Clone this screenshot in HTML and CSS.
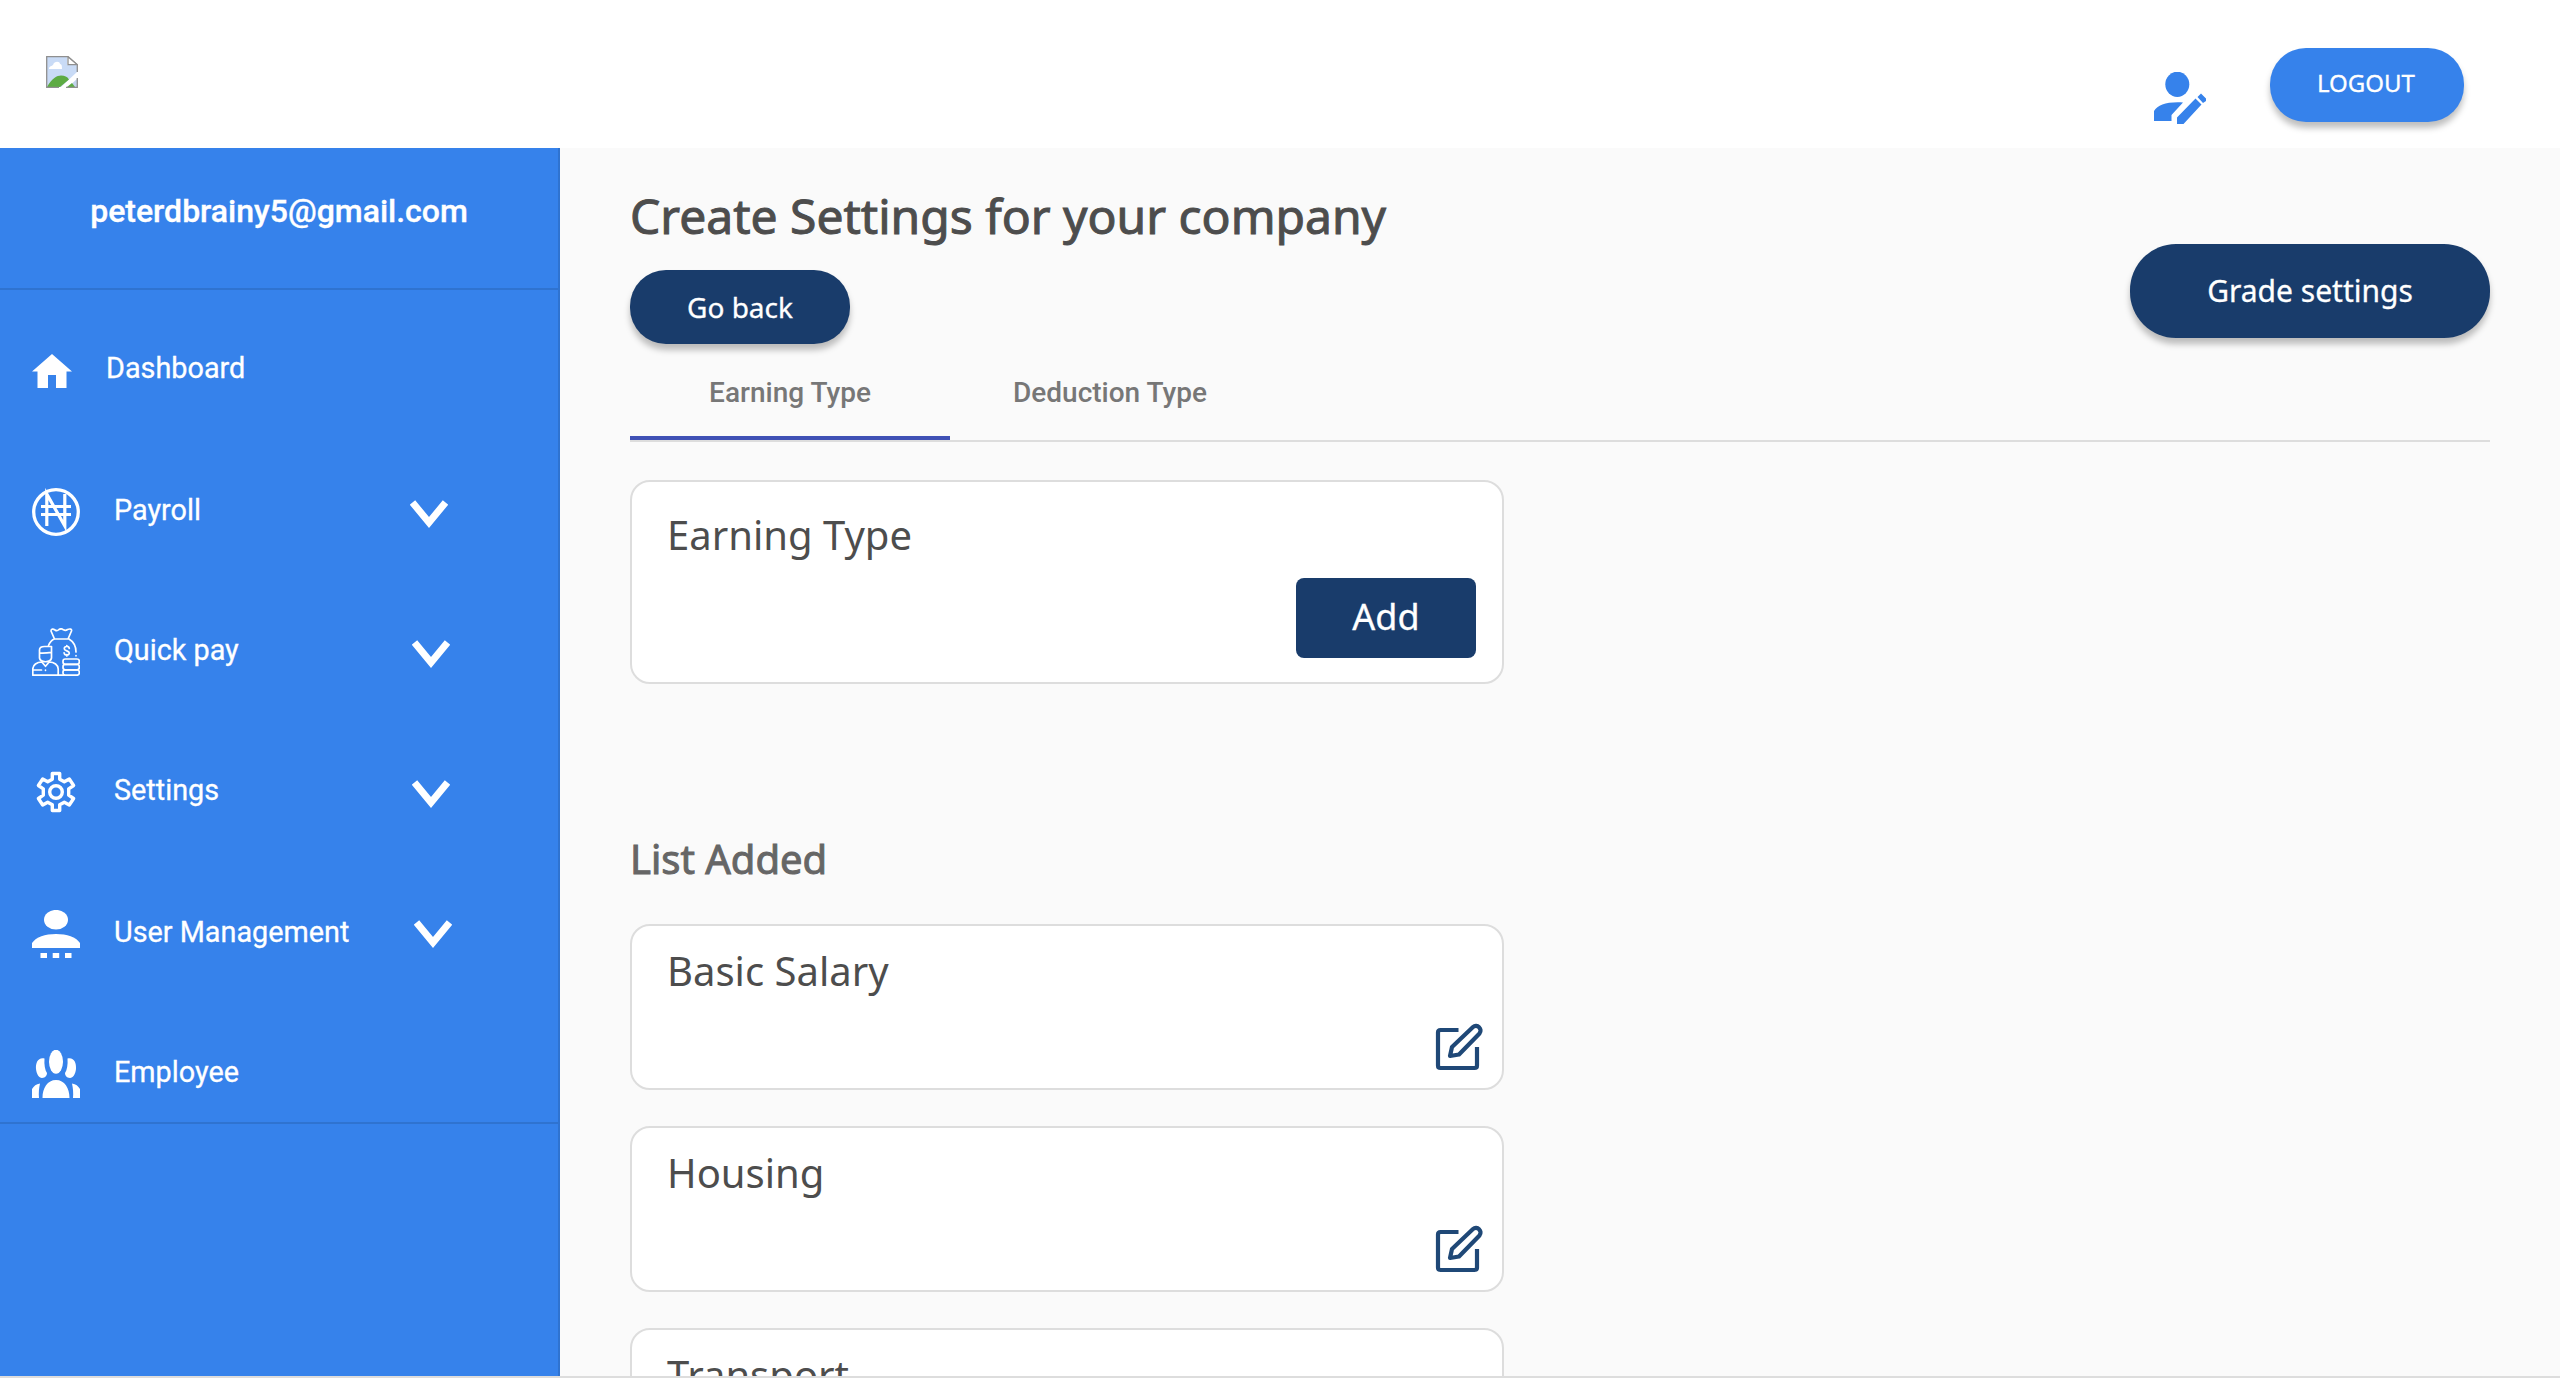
FILE: index.html
```html
<!DOCTYPE html>
<html lang="en">
<head>
<meta charset="utf-8">
<title>Create Settings</title>
<link rel="stylesheet" href="styles.css">
</head>
<body>
<div class="app">
  <header class="header">
    <svg class="logo" viewBox="0 0 32 32">
      <path d="M1 1h20v8h10v7L15 31H1z" fill="#c9dbf6"/>
      <path d="M31 23v8h-9z" fill="#c3d3ee"/>
      <path d="M3 13c0-3 3-3 4-4 1-4 7-4 7-1 2 0 2 3 2 5z" fill="#fff"/>
      <path d="M1 31C6 22 11 19.500 15 19.500c4 0 6 1 8 4L14 31zM21 31l5-4 3 4z" fill="#5dab43"/>
      <path d="M13 31.300H.7V.7H22l9.300 8V16M31.300 22v9.300H20" fill="none" stroke="#8f8f8f" stroke-width="1.300"/>
      <path d="M22 .7v8h9.300z" fill="#fff" stroke="#8f8f8f" stroke-width="1.300"/>
    </svg>
    <div class="header-actions">
      <svg class="profile" viewBox="0 0 52 52" fill="#3682eb">
        <ellipse cx="23.3" cy="12.3" rx="12" ry="12.6"/>
        <path d="M0 49V39c4-6 13-9.500 29-8.500L17.500 43v6z"/>
        <path d="M23 52v-6.500L41.500 26.500l6 6L29.500 52zM43.500 25l3.500-3.500 5 5v2.500l-3 2z"/>
      </svg>
      <button class="btn btn-logout">LOGOUT</button>
    </div>
  </header>
  <div class="body">
    <aside class="sidebar">
      <div class="account">peterdbrainy5@gmail.com</div>
      <nav class="nav">
        <a class="nav-row nav-home">
          <svg class="icon-home" viewBox="0 0 40 34" fill="#fff"><path d="M20 0l20 17.500h-5.500V34H24V21h-8v13H5.500V17.500H0z"/></svg>
          <span class="label">Dashboard</span>
        </a>
        <a class="nav-row">
          <svg class="icon" viewBox="0 0 48 48" fill="none" stroke="#fff">
            <circle cx="24" cy="24" r="22.300" stroke-width="3.300"/>
            <path d="M14.800 38V6l18 32V6M9 18.500h30M9 26.500h30" stroke-width="3.200"/>
          </svg>
          <span class="label">Payroll</span>
          <svg class="chevron chevron-a" viewBox="0 0 38 28"><path d="M2.500 2.500L19 22.500 35.500 2.500" fill="none" stroke="#fff" stroke-width="7"/></svg>
        </a>
        <a class="nav-row">
          <svg class="icon" viewBox="0 0 48 48" fill="none" stroke="#fff" stroke-width="1.700" stroke-linejoin="round" stroke-linecap="round">
            <path d="M22.500 11L19 3c0-2 2-2.500 4-1 2 1.500 3 .5 4-.5 1.500-1 3-1 4.500.3 1.500 1 2.500 1 4-.3 2.500-1 4.500-.5 4 1.500l-3.500 8zM16.500 17.500c1.500-3.500 4-6 6-6.500M37 11c5 3 7 7 7 13M44 27.500v.3"/>
            <path d="M37.300 20.500c-.5-3-5.300-2.500-5 .3.300 2.500 5 1.600 5 4.200 0 2.700-4.700 2.800-5.200-.2M34.800 17.500v1M34.800 26.500v1.500"/>
            <path d="M7.500 30V22c0-2 2-3.500 5-3.500h7V30c-1 5-11 5-12 0zM7.500 25c4 .3 8 0 12-.7"/>
            <path d="M.8 47.200V41c0-4 4-7 9-7l3.700 4.300 3.700-4.300c5 0 9 3 9 7v6.200zM.8 42h8.700M13.500 42v.3"/>
            <rect x="31" y="31" width="16.300" height="5.400" rx="2.300"/><rect x="31" y="36.400" width="16.300" height="5.400" rx="2.300"/><rect x="31" y="41.800" width="16.300" height="5.400" rx="2.300"/><path d="M26 47.200h6"/>
          </svg>
          <span class="label">Quick pay</span>
          <svg class="chevron chevron-b" viewBox="0 0 38 28"><path d="M2.500 2.500L19 22.500 35.500 2.500" fill="none" stroke="#fff" stroke-width="7"/></svg>
        </a>
        <a class="nav-row">
          <svg class="icon" viewBox="0 0 48 48" fill="none" stroke="#fff" stroke-width="3.400" stroke-linejoin="round">
            <path d="M20.300 5.500h7.400v5.700l4.600 2.600 5-2.800 4.300 6.500-4.900 3.300v6.400l4.900 3.300-4.300 6.500-5-2.800-4.600 2.600v5.700h-7.400v-5.700l-4.600-2.600-5 2.800-4.300-6.500 4.900-3.300v-6.400l-4.900-3.300 4.300-6.500 5 2.800 4.600-2.600z"/>
            <circle cx="24" cy="24" r="6.300"/>
          </svg>
          <span class="label">Settings</span>
          <svg class="chevron chevron-b" viewBox="0 0 38 28"><path d="M2.500 2.500L19 22.500 35.500 2.500" fill="none" stroke="#fff" stroke-width="7"/></svg>
        </a>
        <a class="nav-row">
          <svg class="icon low" viewBox="0 0 48 48" fill="#fff">
            <ellipse cx="24" cy="9.700" rx="12" ry="9.800"/><path d="M0 38V33c4-6 13-9 24-9s20 3 24 9v5z"/><path d="M8.500 43H15v5H8.500zM20.700 43h6.500v5h-6.500zM33 43h6.500v5H33z"/>
          </svg>
          <span class="label low-label">User Management</span>
          <svg class="chevron chevron-c" viewBox="0 0 38 28"><path d="M2.500 2.500L19 22.500 35.500 2.500" fill="none" stroke="#fff" stroke-width="7"/></svg>
        </a>
        <a class="nav-row nav-last">
          <svg class="icon low" viewBox="0 0 48 48" fill="#fff">
            <ellipse cx="24" cy="11.700" rx="7" ry="12"/>
            <path d="M12.500 8.500C6 7 3.500 13 4 19c.5 5 3 9 6 9 3.500 0 5-3 5-5-2-3-3-8-2.500-14.500zM35.500 8.500C42 7 44.500 13 44 19c-.5 5-3 9-6 9-3.500 0-5-3-5-5 2-3 3-8 2.500-14.500z"/>
            <path d="M10.500 48c0-10 5-18 13.500-18s13.500 8 13.500 18zM0 48v-9c2-3 4-5 8-5.500C7 38 6.500 43 7 48zM48 48v-9c-2-3-4-5-8-5.500 1 4.500 1.500 9.500 1 14.500z"/>
          </svg>
          <span class="label low-label">Employee</span>
        </a>
      </nav>
    </aside>
    <main class="main">
      <div class="top">
        <div>
          <h1 class="title">Create Settings for your company</h1>
          <button class="btn btn-back">Go back</button>
        </div>
        <button class="btn btn-grade">Grade settings</button>
      </div>
      <div class="tabs">
        <div class="tab tab-active">Earning Type</div>
        <div class="tab">Deduction Type</div>
      </div>
      <section class="card card-form">
        <div class="card-title">Earning Type</div>
        <button class="btn-add">Add</button>
      </section>
      <h2 class="subtitle">List Added</h2>
      <div class="list">
        <section class="card card-item"><div class="card-title">Basic Salary</div>
          <svg class="edit" viewBox="0 0 48 48" fill="none" stroke="#1f4877" stroke-width="4.200" stroke-linejoin="round"><path d="M23.500 7H5.500Q3 7 3 9.500v33Q3 45 5.500 45h34q2.500 0 2.500-2.500V24"/><path d="M15 33l2-9L38 4c4-3.500 10 2 6.500 6.500L24 31.500z"/></svg></section>
        <section class="card card-item"><div class="card-title">Housing</div>
          <svg class="edit" viewBox="0 0 48 48" fill="none" stroke="#1f4877" stroke-width="4.200" stroke-linejoin="round"><path d="M23.500 7H5.500Q3 7 3 9.500v33Q3 45 5.500 45h34q2.500 0 2.500-2.500V24"/><path d="M15 33l2-9L38 4c4-3.500 10 2 6.500 6.500L24 31.500z"/></svg></section>
        <section class="card card-item"><div class="card-title">Transport</div></section>
      </div>
    </main>
  </div>
  <footer class="footer"></footer>
</div>
</body>
</html>
```
FILE: styles.css
```css
* { box-sizing: border-box; }
body { margin: 0; background: #fafafa; font-family: "Noto Sans", sans-serif; color: #4d4d4d; }
svg { display: block; flex: none; }
button { border: 0; font-family: inherit; color: #fff; padding: 0 0 2px; display: block; -webkit-text-stroke: .3px #fff; }
.app { height: 1378px; display: flex; flex-direction: column; overflow: hidden; }
.header { height: 148px; flex: none; background: #fff; display: flex; justify-content: space-between; padding: 48px 96px 0 46px; }
.logo { width: 32px; height: 32px; margin-top: 8px; }
.header-actions { display: flex; gap: 64px; }
.profile { width: 52px; height: 52px; margin-top: 24px; }
.btn { border-radius: 36px; background: #193c6b; box-shadow: 0 6px 6px rgba(0, 0, 0, .25); }
.btn-logout { width: 194px; height: 74px; background: #3682eb; font-size: 24px; padding: 0 2px 6px 0; }
.body { flex: 1; min-height: 0; display: flex; }
.sidebar { width: 560px; flex: none; background: #3682eb; border-right: 2px solid #2f73d0; color: #fff; font-family: Roboto, sans-serif; }
.account { height: 142px; border-bottom: 2px solid #2f73d0; font-size: 32px; font-weight: 500; line-height: 38px; text-align: center; padding-top: 44px; -webkit-text-stroke: .35px #fff; }
.nav { padding-top: 12px; border-bottom: 2px solid #2f73d0; }
.nav-row { height: 140px; display: flex; align-items: center; padding: 0 106px 0 32px; }
.nav-last { height: 120px; align-items: flex-start; }
.icon { width: 48px; height: 48px; }
.icon-home { width: 40px; height: 34px; margin-top: -2px; }
.label { margin-left: 34px; font-size: 28.8px; line-height: 34px; margin-bottom: 4px; -webkit-text-stroke: .3px #fff; }
.nav-home .label { margin-bottom: 8px; }
.low { margin-top: 4px; }
.low-label { margin-bottom: 0; }
.nav-last .icon { margin-top: 48px; }
.nav-last .label { margin-top: 53px; }
.chevron { width: 38px; height: 28px; margin-left: auto; margin-top: 4px; }
.chevron-a { margin-right: 4px; }
.chevron-b { margin-right: 2px; }
.main { flex: 1; padding: 38px 70px 0; overflow: hidden; }
.top { display: flex; justify-content: space-between; }
.title { margin: -2px 0 0; font-size: 48px; font-weight: 400; line-height: 64px; height: 86px; -webkit-text-stroke: 1px #4d4d4d; }
.btn-back { width: 220px; height: 74px; font-size: 28px; padding-bottom: 1px; }
.btn-grade { width: 360px; height: 94px; margin-top: 58px; font-size: 30px; border-radius: 46px; }
.tabs { height: 98px; display: flex; border-bottom: 2px solid #ddd; font: 500 28px/98px Roboto, sans-serif; color: #777; text-align: center; }
.tab { width: 320px; height: 96px; }
.tab-active { border-bottom: 4px solid #3f51b5; }
.card { width: 874px; background: #fff; border: 2px solid #ddd; border-radius: 20px; display: flex; flex-direction: column; }
.card-title { font-size: 40px; line-height: 54px; padding-left: 35px; }
.card-form { height: 204px; margin-top: 38px; padding-top: 26px; }
.btn-add { align-self: flex-end; width: 180px; height: 80px; margin: 16px 26px 0 0; border-radius: 8px; background: #193c6b; font-size: 36px; padding-bottom: 4px; }
.subtitle { margin: 148px 0 38px; font-size: 40px; line-height: 54px; font-weight: 400; color: #666; -webkit-text-stroke: 1px #666; }
.list { display: flex; flex-direction: column; gap: 36px; }
.card-item { height: 166px; padding-top: 18px; }
.edit { width: 48px; height: 48px; align-self: flex-end; margin: 25px 19px 0 0; }
.footer { height: 2px; flex: none; background: #ddd; }
```
